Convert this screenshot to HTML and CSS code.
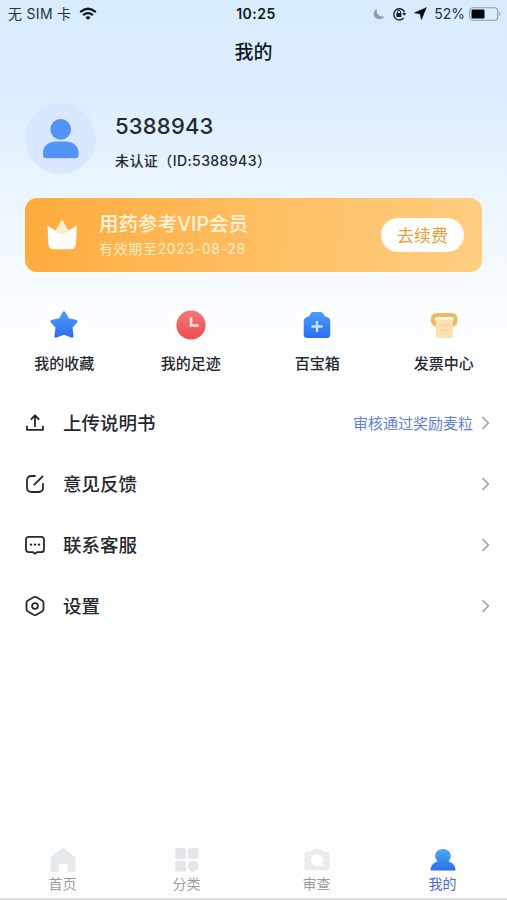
FILE: index.html
```html
<!DOCTYPE html>
<html lang="zh-CN">
<head>
<meta charset="utf-8">
<title>我的</title>
<link rel="stylesheet" href="styles.css">
</head>
<body>
<div class="app">
  <div class="status">
    <div class="status-left">
      <span class="carrier">无 SIM 卡</span>
      <svg width="18" height="14" viewBox="0 0 18 14" fill="none" stroke="#101820" stroke-width="2.3"><path d="M1.2 5.2Q9-1.6 16.8 5.2M4.1 8.2Q9 4 13.9 8.2"/><path d="M6.3 10.3Q9 8.2 11.7 10.3L9 13Z" fill="#101820" stroke="none"/></svg>
    </div>
    <div class="time">10:25</div>
    <div class="status-right">
      <svg class="moon" width="13" height="12" viewBox="0 0 13 12"><path d="M4 .7C2.6 5.6 6.3 9.2 11.5 8.4 8.8 12 3.6 12 1.5 8.7-.2 5.8.8 2.3 4 .7Z" fill="#929da8"/></svg>
      <svg class="lock" width="15" height="14" viewBox="0 0 15 14" fill="none" stroke="#17202a" stroke-width="1.4"><path d="M11.7 10.9A5.6 5.6 0 1 1 12.5 5.2"/><path d="M10.1 6H14.3L12.3 8.8Z" fill="#17202a" stroke="none"/><path d="M5.3 6.4V5a1.6 1.6 0 0 1 3.2 0V6.4" stroke-width="1"/><rect x="4.3" y="6.1" width="5.2" height="3.9" rx=".5" fill="#17202a" stroke="none"/></svg>
      <svg class="arrow" width="13" height="13" viewBox="0 0 13 13"><path d="M12.3.7 7.400 12.600 6.200 7 .5 5.800Z" fill="#080d12" stroke="#080d12" stroke-width=".6" stroke-linejoin="round"/></svg>
      <span class="percent">52%</span>
      <svg class="battery" width="32" height="14" viewBox="0 0 32 14"><rect x=".7" y=".7" width="28" height="12.6" rx="3.4" fill="none" stroke="#8f9ba4" stroke-width="1.1"/><rect x="2.5" y="2.5" width="13" height="9" rx="1.3" fill="#05080b"/><path d="M30.2 5v4q1.2-.5 1.2-2t-1.2-2Z" fill="#8f9ba4"/></svg>
    </div>
  </div>
  <h1 class="title">我的</h1>

  <section class="profile">
    <div class="avatar">
      <svg width="36" height="40" viewBox="0 0 36 40" fill="#5295f8"><circle cx="17.7" cy="10.4" r="10.4"/><path d="M0 36V34C0 26.500 6 22.500 13 22.500H23C30 22.500 35.600 27 35.600 34V36Q35.600 39.300 32 39.300H3.500Q0 39.300 0 36Z"/></svg>
    </div>
    <div class="who">
      <div class="name">5388943</div>
      <div class="ident">未认证（ID:5388943）</div>
    </div>
  </section>

  <section class="vip">
    <svg class="crown" width="30" height="30" viewBox="0 0 30 30"><path d="M.5 6.400Q0 5.600 1 6L8.700 10.500 14 1.200Q15 0 16 1.200L21.300 10.500 29 6Q30 5.600 29.800 6.500L29 24Q28.700 29.300 23.500 29.300H6.900Q1.700 29.300 1.300 24Z" fill="#fffdfa"/><path d="M8.700 10.500 14 1.200Q15 0 16 1.200L21.300 10.500Q19 14.500 15 14.500T8.700 10.500Z" fill="#ffedd0"/></svg>
    <div class="vip-text">
      <div class="vip-title">用药参考VIP会员</div>
      <div class="vip-date">有效期至2023-08-28</div>
    </div>
    <div class="renew">去续费</div>
  </section>

  <section class="quick">
    <div class="quick-item">
      <div class="quick-icon"><svg width="30" height="30" viewBox="0 0 30 30"><defs><linearGradient id="blue" x1="0" y1="0" x2="0" y2="1"><stop stop-color="#4c9bf7"/><stop offset="1" stop-color="#2b6fee"/></linearGradient></defs><path d="M15 3 18.700 9.800 26.800 11.400 21.700 17.200 22.900 26 15 22.800 7.100 26 8.300 17.200 3.200 11.400 11.300 9.800Z" fill="url(#blue)" stroke="url(#blue)" stroke-width="3.400" stroke-linejoin="round"/></svg></div>
      <span>我的收藏</span>
    </div>
    <div class="quick-item">
      <div class="quick-icon"><svg width="30" height="30" viewBox="0 0 30 30"><defs><linearGradient id="red" x1="0" y1="0" x2="0" y2="1"><stop stop-color="#f3787a"/><stop offset="1" stop-color="#ed4c51"/></linearGradient></defs><circle cx="15" cy="15" r="14.600" fill="url(#red)"/><path d="M15 7.500V15.500H22.700" fill="none" stroke="#ffe1df" stroke-width="2.600"/></svg></div>
      <span>我的足迹</span>
    </div>
    <div class="quick-item">
      <div class="quick-icon"><svg width="30" height="30" viewBox="0 0 30 30"><path d="M1.700 10.800Q1.700 8.500 3.600 7.700L6.600 6.200Q7.700 5.600 8.200 4.300 9 2 11.500 2H18.500Q21 2 21.800 4.300 22.300 5.600 23.400 6.200L26.400 7.700Q28.300 8.500 28.300 10.800V24.500Q28.300 28 24.800 28H5.200Q1.700 28 1.700 24.500Z" fill="url(#blue)"/><path d="M15 11V22M9.500 16.500H20.500" stroke="#c8e0ff" stroke-width="2.400"/></svg></div>
      <span>百宝箱</span>
    </div>
    <div class="quick-item">
      <div class="quick-icon"><svg width="30" height="30" viewBox="0 0 30 30"><rect x="2" y="3" width="26.500" height="13.500" rx="5.500" fill="#efb962"/><rect x="5.700" y="7" width="19" height="4.300" rx="2" fill="#fff1d8"/><path d="M7 9.500H23.800V25.500Q23.800 28 21.300 28H9.500Q7 28 7 25.500Z" fill="#fde0b2"/><path d="M10 15H20.500M10 20.500H20.500" stroke="#f5ce94" stroke-width="1.200"/><path d="M7 8.200H23.800" stroke="#fff9ec" stroke-width="2"/></svg></div>
      <span>发票中心</span>
    </div>
  </section>

  <section class="menu">
    <div class="row">
      <svg class="row-icon" viewBox="0 0 20 20"><path d="M10 13.300V2.500M6.400 6 10 2.300 13.600 6M2 13.500V16.800H18V13.500"/></svg>
      <span class="label">上传说明书</span><span class="hint">审核通过奖励麦粒</span>
      <svg class="chevron" viewBox="0 0 8 14"><path d="M1 1.200 6.800 7 1 12.800"/></svg>
    </div>
    <div class="row">
      <svg class="row-icon" viewBox="0 0 20 20"><path d="M10 2H6.500Q2 2 2 6.500V13.500Q2 18 6.500 18H13.500Q18 18 18 13.500V10M9.300 10.700 17.500 2.500"/></svg>
      <span class="label">意见反馈</span>
      <svg class="chevron" viewBox="0 0 8 14"><path d="M1 1.200 6.800 7 1 12.800"/></svg>
    </div>
    <div class="row">
      <svg class="row-icon" viewBox="0 0 20 20"><path d="M4 1.800H16Q19 1.800 19 4.800V14.200Q19 17.200 16 17.200H12L10 18.700 8 17.200H4Q1 17.200 1 14.200V4.800Q1 1.800 4 1.800Z"/><g fill="#252a2f" stroke="none"><circle cx="6" cy="9.600" r="1.200"/><circle cx="10" cy="9.600" r="1.200"/><circle cx="14" cy="9.600" r="1.200"/></g></svg>
      <span class="label">联系客服</span>
      <svg class="chevron" viewBox="0 0 8 14"><path d="M1 1.200 6.800 7 1 12.800"/></svg>
    </div>
    <div class="row">
      <svg class="row-icon" viewBox="0 0 20 20"><path d="M8.500 1.300Q10 .5 11.500 1.300L17 4.500Q18.500 5.300 18.500 7V13Q18.500 14.700 17 15.500L11.500 18.700Q10 19.500 8.500 18.700L3 15.500Q1.500 14.700 1.500 13V7Q1.500 5.300 3 4.500Z"/><circle cx="10" cy="10" r="2.900"/></svg>
      <span class="label">设置</span>
      <svg class="chevron" viewBox="0 0 8 14"><path d="M1 1.200 6.800 7 1 12.800"/></svg>
    </div>
  </section>

  <nav class="tabs">
    <div class="tab"><svg viewBox="0 0 28 26"><path d="M12 1.800Q14 .2 16 1.800L25.300 9.500Q26.800 10.800 26.600 12.800V22.500Q26.600 25 24 25H18.700V19Q18.700 16.900 16.500 16.900H11.900Q9.700 16.900 9.700 19V25H4Q1.400 25 1.400 22.500V12.800Q1.200 10.800 2.700 9.500Z" fill="#e6e9ec"/></svg><span>首页</span></div>
    <div class="tab"><svg viewBox="0 0 28 26" fill="#e4e7ea"><rect x="2" y="1" width="11" height="11" rx="2.500"/><rect x="14.700" y="1" width="11" height="11" rx="2.500"/><rect x="2" y="13.700" width="11" height="11" rx="2.500"/><circle cx="20.200" cy="19.200" r="5.500"/></svg><span>分类</span></div>
    <div class="tab"><svg viewBox="0 0 28 26"><path d="M4 4.500H8L9.700 2.500Q10.200 2 11 2H17Q17.800 2 18.300 2.500L20 4.500H24Q26.500 4.500 26.500 7V21Q26.500 23.500 24 23.500H4Q1.500 23.500 1.500 21V7Q1.500 4.500 4 4.500Z" fill="#e9ebee"/><path d="M14 7.500A6 6 0 1 0 17 18.700L20.500 19.500 19.500 16.200A6 6 0 0 0 14 7.500Z" fill="#fff"/></svg><span>审查</span></div>
    <div class="tab active"><svg viewBox="0 0 28 26"><defs><linearGradient id="user" x1="0" y1="0" x2="0" y2="1"><stop stop-color="#4baaf4"/><stop offset="1" stop-color="#2c6eeb"/></linearGradient></defs><path d="M14 2C18.800 2 21.700 5 21.700 9 21.700 11.400 20.500 13.200 19.300 14.300 23.500 15.500 26 18.500 26.500 22.200Q26.500 23.500 25.300 23.500H2.700Q1.500 23.500 1.500 22.200C2 18.500 4.500 15.500 8.700 14.300 7.500 13.200 6.300 11.400 6.300 9 6.300 5 9.200 2 14 2Z" fill="url(#user)"/></svg><span>我的</span></div>
  </nav>
</div>
</body>
</html>
```
FILE: styles.css
```css
* { box-sizing: border-box; }
body {
  margin: 0;
  font-family: Inter, "Noto Sans CJK SC", sans-serif;
  color: #24292f;
}
svg { display: block; flex: none; }
.app {
  width: 507px;
  height: 900px;
  overflow: hidden;
  display: flex;
  flex-direction: column;
  white-space: nowrap;
  background: linear-gradient(180deg, #d9ecfc 0, #dceefd 100px, #edf6fe 200px, #f7fbff 290px, #fff 390px);
}
.status {
  height: 27px;
  flex: none;
  display: grid;
  grid-template-columns: 1fr auto 1fr;
  align-items: center;
  padding: 0 6px 0 8px;
  line-height: 20px;
}
.status-left, .status-right { display: flex; align-items: center; }
.status-left { gap: 8px; }
.status-right { justify-content: flex-end; }
.carrier { font-size: 14px; letter-spacing: .3px; color: #26323d; }
.time { font-size: 14px; font-weight: 600; letter-spacing: .5px; color: #101820; padding-left: 3px; }
.lock { margin-left: 6px; }
.arrow { margin-left: 7px; }
.percent { margin-left: 7px; font-size: 14px; color: #26323d; }
.battery { margin-left: 4px; }
.title {
  margin: 0;
  height: 49px;
  padding-top: 2px;
  font-size: 19px;
  font-weight: 500;
  line-height: 48px;
  text-align: center;
  color: #111820;
}
.profile { display: flex; padding: 27px 25px 0; height: 122px; flex: none; }
.avatar {
  width: 71px;
  height: 71px;
  border-radius: 50%;
  background: #d9e8fe;
  display: flex;
  align-items: center;
  justify-content: center;
}
.who { margin-left: 19px; padding-top: 8px; }
.name { font-size: 22px; line-height: 30px; font-weight: 500; letter-spacing: .2px; }
.ident { margin-top: 10px; font-size: 14px; line-height: 20px; font-weight: 500; letter-spacing: .42px; }
.vip {
  height: 74px;
  flex: none;
  margin: 0 25px;
  padding: 0 18px 0 22px;
  border-radius: 12px;
  display: flex;
  align-items: center;
  background: linear-gradient(100deg, #feab3c, #ffbd61 50%, #ffce81);
}
.vip-text { margin-left: 22px; color: #fff4dc; }
.vip-title { font-size: 19.500px; line-height: 27px; font-weight: 500; letter-spacing: .05px; }
.vip-date { font-size: 14px; line-height: 21px; letter-spacing: .65px; color: #ffecc6; }
.renew {
  width: 83px;
  height: 34px;
  margin-left: auto;
  border-radius: 17px;
  background: #fff;
  color: #e8a038;
  font-size: 17px;
  line-height: 36px;
  text-align: center;
}
.quick { display: grid; grid-template-columns: repeat(4, 1fr); height: 120px; flex: none; padding: 26px 0 0 1px; }
.quick-item { display: flex; flex-direction: column; align-items: center; font-size: 15px; line-height: 22px; font-weight: 500; }
.quick-icon {
  width: 54px;
  height: 54px;
  border-radius: 50%;
  display: flex;
  align-items: center;
  justify-content: center;
  background: radial-gradient(circle, #fff 35%, #fff0 70%);
}
.quick-item span { margin-top: 1px; }
.menu { flex: 1; }
.row { height: 61.200px; display: flex; align-items: center; padding: 0 17px 0 25px; }
.row-icon { width: 20px; height: 20px; fill: none; stroke: #252a2f; stroke-width: 1.800; stroke-linecap: round; stroke-linejoin: round; }
.label { margin-left: 18px; font-size: 18.500px; line-height: 26px; font-weight: 500; }
.hint { margin-left: auto; font-size: 15px; color: #617ed9; }
.chevron { width: 9px; height: 14px; margin-left: auto; fill: none; stroke: #a6a6a6; stroke-width: 1.700; }
.hint + .chevron { margin-left: 8px; }
.tabs {
  height: 62px;
  flex: none;
  padding: 9px 0 0;
  display: grid;
  grid-template-columns: 125px 123px 137px 115px;
  background: #fefefe;
  border-bottom: 2px solid #dedede;
}
.tab { display: flex; flex-direction: column; align-items: center; font-size: 14px; line-height: 20px; color: #999da1; }
.tab svg { width: 28px; height: 26px; }
.tab span { margin-top: 1px; }
.tab.active { color: #4d67d7; }
```
